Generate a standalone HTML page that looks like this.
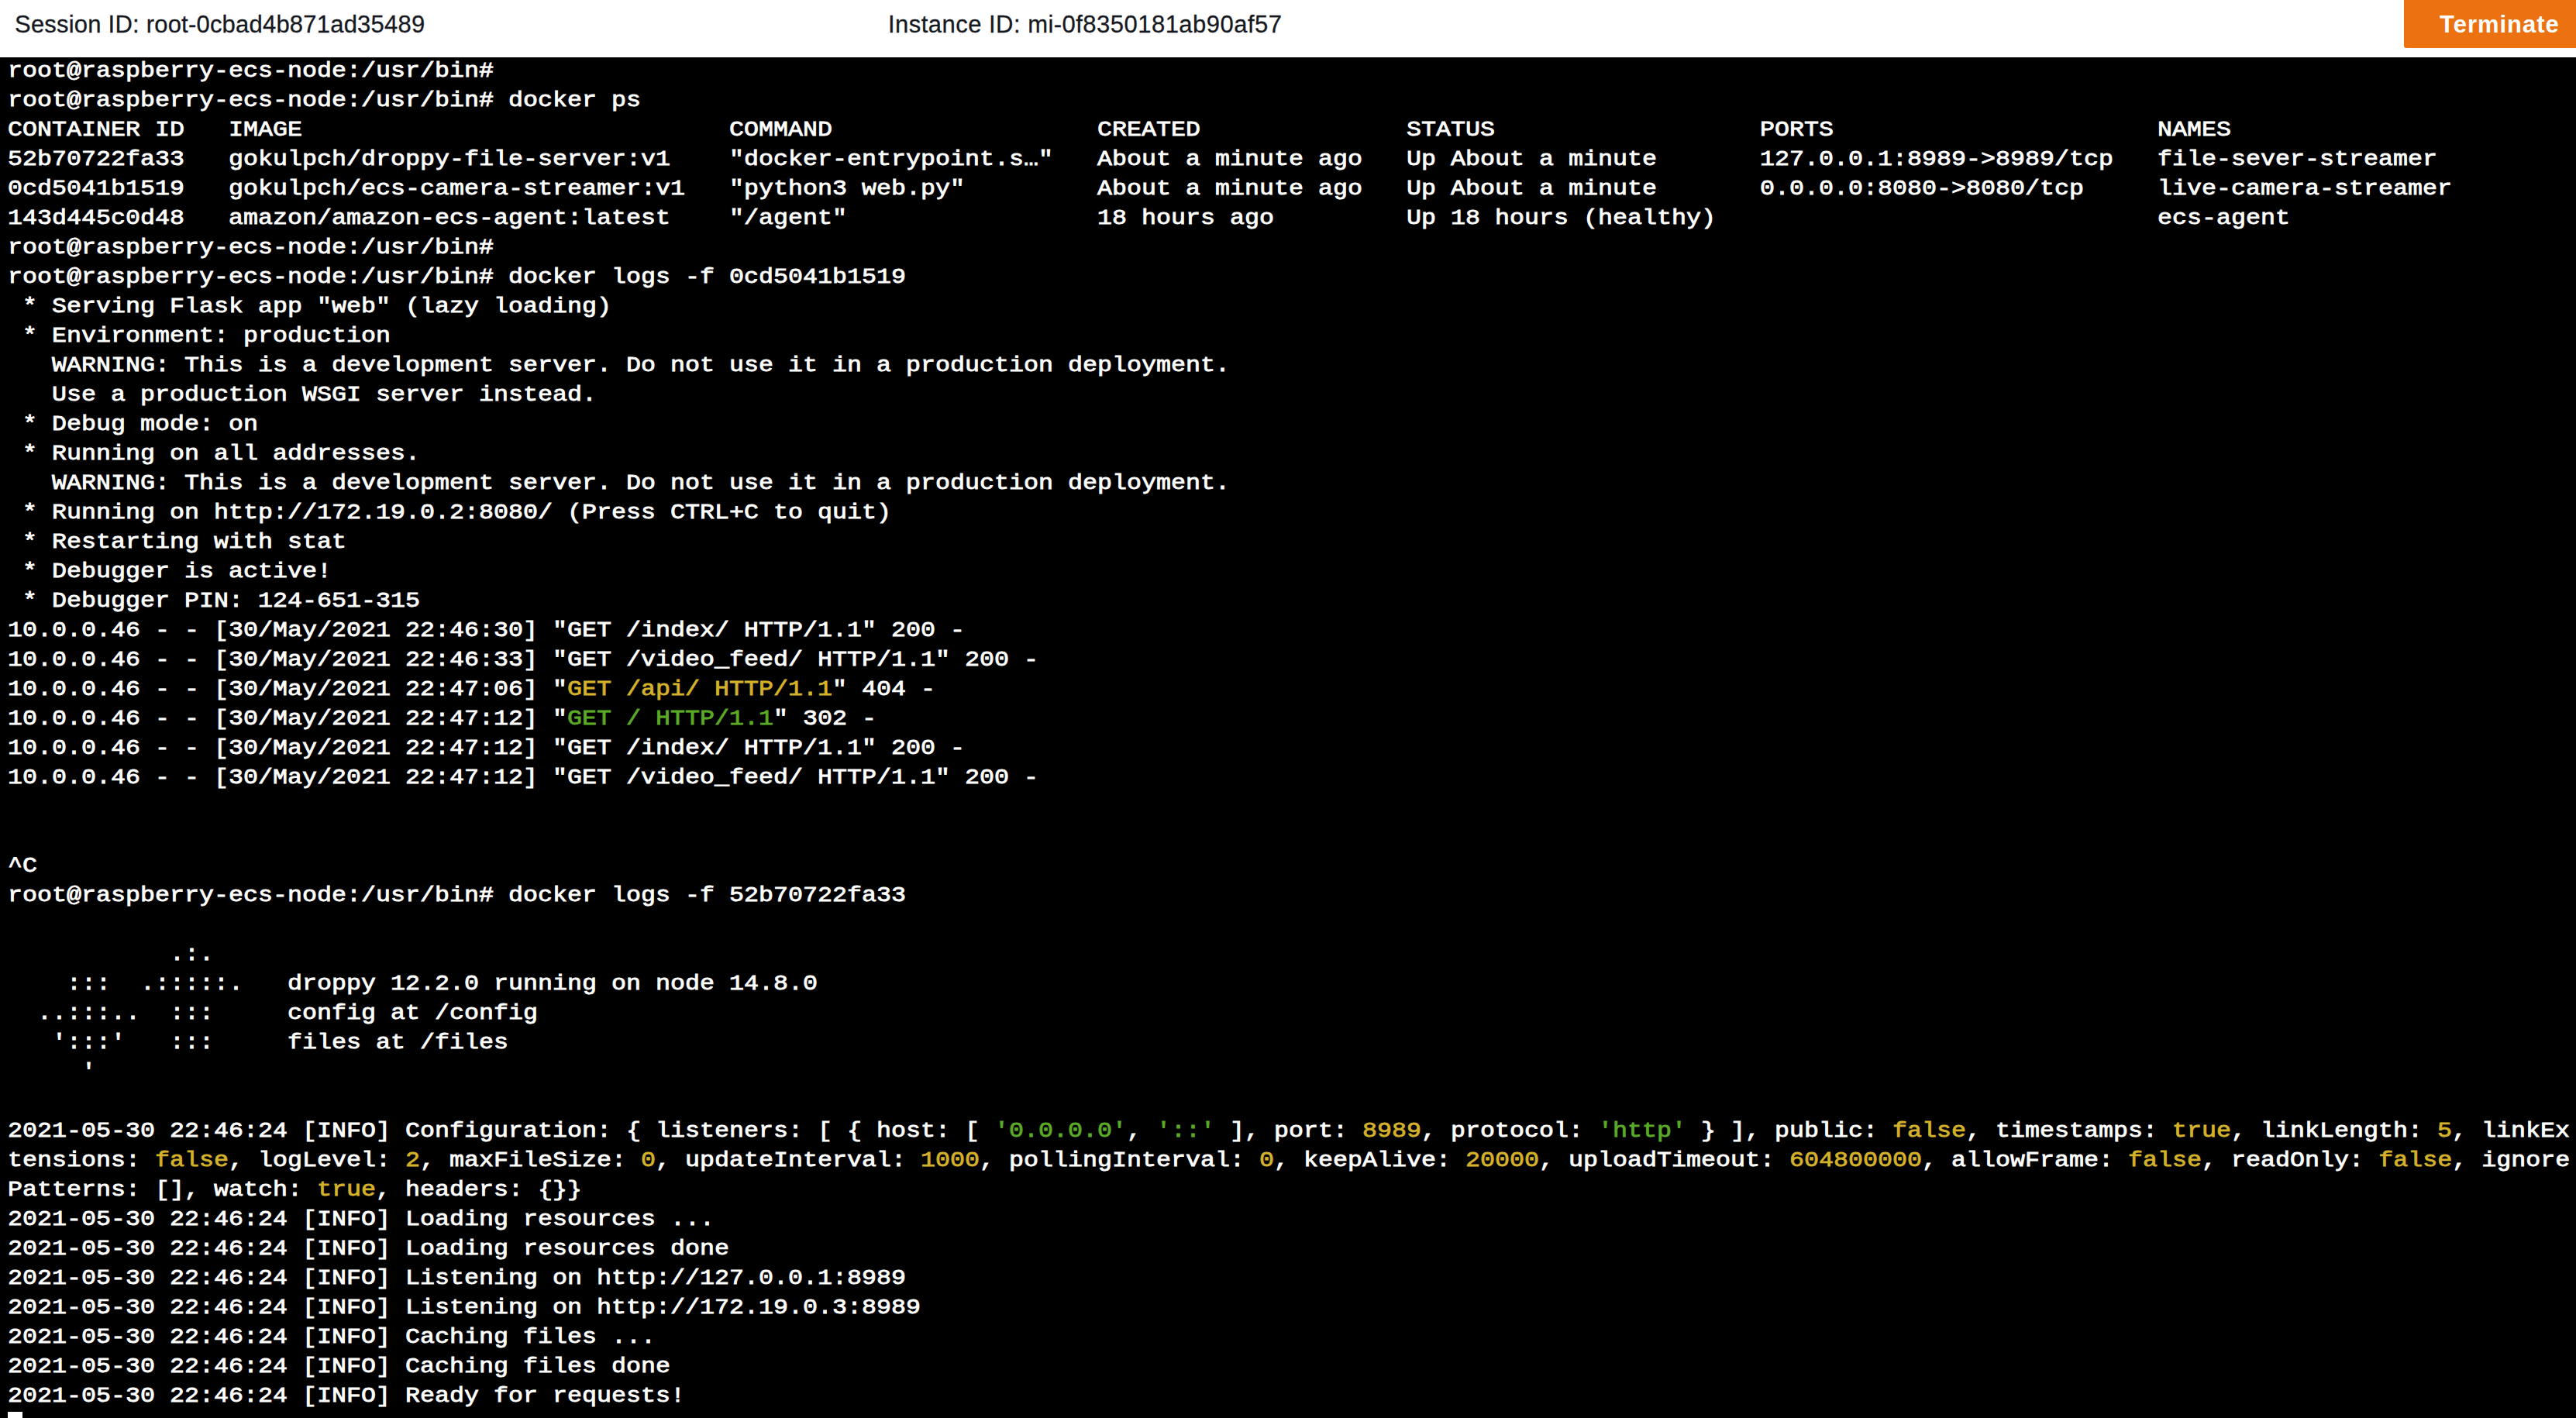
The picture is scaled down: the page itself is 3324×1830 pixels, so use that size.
<!DOCTYPE html>
<html><head><meta charset="utf-8"><style>
html,body{margin:0;padding:0;width:3324px;height:1830px;overflow:hidden;background:#000;}
#hdr{position:absolute;left:0;top:0;width:3324px;height:74px;background:#fff;}
.ht{position:absolute;top:1px;height:62px;line-height:62px;font-family:"Liberation Sans",sans-serif;font-size:31px;color:#16191f;white-space:pre;-webkit-text-stroke:0.3px #16191f;}
#btn{position:absolute;left:3102px;top:-10px;width:240px;height:72px;background:#ec7211;border-radius:3px;}
#btnt{position:absolute;left:3148px;top:1px;height:62px;line-height:62px;font-family:"Liberation Sans",sans-serif;font-weight:bold;font-size:31px;letter-spacing:1px;color:#fff;white-space:pre;}
#term{position:absolute;left:0;top:74px;width:3324px;height:1756px;background:#000;overflow:hidden;}
.r{position:absolute;left:10.2px;height:38px;line-height:38px;font-family:"Liberation Mono",monospace;font-size:27.5px;letter-spacing:0.0191px;font-weight:normal;-webkit-text-stroke:0.8px currentColor;color:#fff;white-space:pre;transform:scaleX(1.15);transform-origin:0 0;}
#cur{position:absolute;left:10px;top:1748px;width:19px;height:38px;background:#fff;}
</style></head><body>
<div id="hdr">
<div class="ht" style="left:19px;letter-spacing:0.21px">Session ID: root-0cbad4b871ad35489</div>
<div class="ht" style="left:1146px;letter-spacing:0.47px">Instance ID: mi-0f8350181ab90af57</div>
<div id="btn"></div>
<div id="btnt">Terminate</div>
</div>
<div id="term">
<div class="r" style="top:-1.0px">root@raspberry-ecs-node:/usr/bin#</div>
<div class="r" style="top:37.0px">root@raspberry-ecs-node:/usr/bin# docker ps</div>
<div class="r" style="top:75.0px">CONTAINER ID   IMAGE                             COMMAND                  CREATED              STATUS                  PORTS                      NAMES</div>
<div class="r" style="top:113.0px">52b70722fa33   gokulpch/droppy-file-server:v1    &quot;docker-entrypoint.s…&quot;   About a minute ago   Up About a minute       127.0.0.1:8989-&gt;8989/tcp   file-sever-streamer</div>
<div class="r" style="top:151.0px">0cd5041b1519   gokulpch/ecs-camera-streamer:v1   &quot;python3 web.py&quot;         About a minute ago   Up About a minute       0.0.0.0:8080-&gt;8080/tcp     live-camera-streamer</div>
<div class="r" style="top:189.0px">143d445c0d48   amazon/amazon-ecs-agent:latest    &quot;/agent&quot;                 18 hours ago         Up 18 hours (healthy)                              ecs-agent</div>
<div class="r" style="top:227.0px">root@raspberry-ecs-node:/usr/bin#</div>
<div class="r" style="top:265.0px">root@raspberry-ecs-node:/usr/bin# docker logs -f 0cd5041b1519</div>
<div class="r" style="top:303.0px"> * Serving Flask app &quot;web&quot; (lazy loading)</div>
<div class="r" style="top:341.0px"> * Environment: production</div>
<div class="r" style="top:379.0px">   WARNING: This is a development server. Do not use it in a production deployment.</div>
<div class="r" style="top:417.0px">   Use a production WSGI server instead.</div>
<div class="r" style="top:455.0px"> * Debug mode: on</div>
<div class="r" style="top:493.0px"> * Running on all addresses.</div>
<div class="r" style="top:531.0px">   WARNING: This is a development server. Do not use it in a production deployment.</div>
<div class="r" style="top:569.0px"> * Running on http://172.19.0.2:8080/ (Press CTRL+C to quit)</div>
<div class="r" style="top:607.0px"> * Restarting with stat</div>
<div class="r" style="top:645.0px"> * Debugger is active!</div>
<div class="r" style="top:683.0px"> * Debugger PIN: 124-651-315</div>
<div class="r" style="top:721.0px">10.0.0.46 - - [30/May/2021 22:46:30] &quot;GET /index/ HTTP/1.1&quot; 200 -</div>
<div class="r" style="top:759.0px">10.0.0.46 - - [30/May/2021 22:46:33] &quot;GET /video_feed/ HTTP/1.1&quot; 200 -</div>
<div class="r" style="top:797.0px">10.0.0.46 - - [30/May/2021 22:47:06] &quot;<span style="color:#d4b12a">GET /api/ HTTP/1.1</span>&quot; 404 -</div>
<div class="r" style="top:835.0px">10.0.0.46 - - [30/May/2021 22:47:12] &quot;<span style="color:#5aaa28">GET / HTTP/1.1</span>&quot; 302 -</div>
<div class="r" style="top:873.0px">10.0.0.46 - - [30/May/2021 22:47:12] &quot;GET /index/ HTTP/1.1&quot; 200 -</div>
<div class="r" style="top:911.0px">10.0.0.46 - - [30/May/2021 22:47:12] &quot;GET /video_feed/ HTTP/1.1&quot; 200 -</div>
<div class="r" style="top:949.0px"></div>
<div class="r" style="top:987.0px"></div>
<div class="r" style="top:1025.0px">^C</div>
<div class="r" style="top:1063.0px">root@raspberry-ecs-node:/usr/bin# docker logs -f 52b70722fa33</div>
<div class="r" style="top:1101.0px"></div>
<div class="r" style="top:1139.0px">           .:.</div>
<div class="r" style="top:1177.0px">    :::  .:::::.   droppy 12.2.0 running on node 14.8.0</div>
<div class="r" style="top:1215.0px">  ..:::..  :::     config at /config</div>
<div class="r" style="top:1253.0px">   &#x27;:::&#x27;   :::     files at /files</div>
<div class="r" style="top:1291.0px">     &#x27;</div>
<div class="r" style="top:1329.0px"></div>
<div class="r" style="top:1367.0px">2021-05-30 22:46:24 [INFO] Configuration: { listeners: [ { host: [ <span style="color:#5aaa28">&#x27;0.0.0.0&#x27;</span>, <span style="color:#5aaa28">&#x27;::&#x27;</span> ], port: <span style="color:#d4b12a">8989</span>, protocol: <span style="color:#5aaa28">&#x27;http&#x27;</span> } ], public: <span style="color:#d4b12a">false</span>, timestamps: <span style="color:#d4b12a">true</span>, linkLength: <span style="color:#d4b12a">5</span>, linkEx</div>
<div class="r" style="top:1405.0px">tensions: <span style="color:#d4b12a">false</span>, logLevel: <span style="color:#d4b12a">2</span>, maxFileSize: <span style="color:#d4b12a">0</span>, updateInterval: <span style="color:#d4b12a">1000</span>, pollingInterval: <span style="color:#d4b12a">0</span>, keepAlive: <span style="color:#d4b12a">20000</span>, uploadTimeout: <span style="color:#d4b12a">604800000</span>, allowFrame: <span style="color:#d4b12a">false</span>, readOnly: <span style="color:#d4b12a">false</span>, ignore</div>
<div class="r" style="top:1443.0px">Patterns: [], watch: <span style="color:#d4b12a">true</span>, headers: {}}</div>
<div class="r" style="top:1481.0px">2021-05-30 22:46:24 [INFO] Loading resources ...</div>
<div class="r" style="top:1519.0px">2021-05-30 22:46:24 [INFO] Loading resources done</div>
<div class="r" style="top:1557.0px">2021-05-30 22:46:24 [INFO] Listening on http://127.0.0.1:8989</div>
<div class="r" style="top:1595.0px">2021-05-30 22:46:24 [INFO] Listening on http://172.19.0.3:8989</div>
<div class="r" style="top:1633.0px">2021-05-30 22:46:24 [INFO] Caching files ...</div>
<div class="r" style="top:1671.0px">2021-05-30 22:46:24 [INFO] Caching files done</div>
<div class="r" style="top:1709.0px">2021-05-30 22:46:24 [INFO] Ready for requests!</div>
<div id="cur"></div>
</div>
</body></html>
